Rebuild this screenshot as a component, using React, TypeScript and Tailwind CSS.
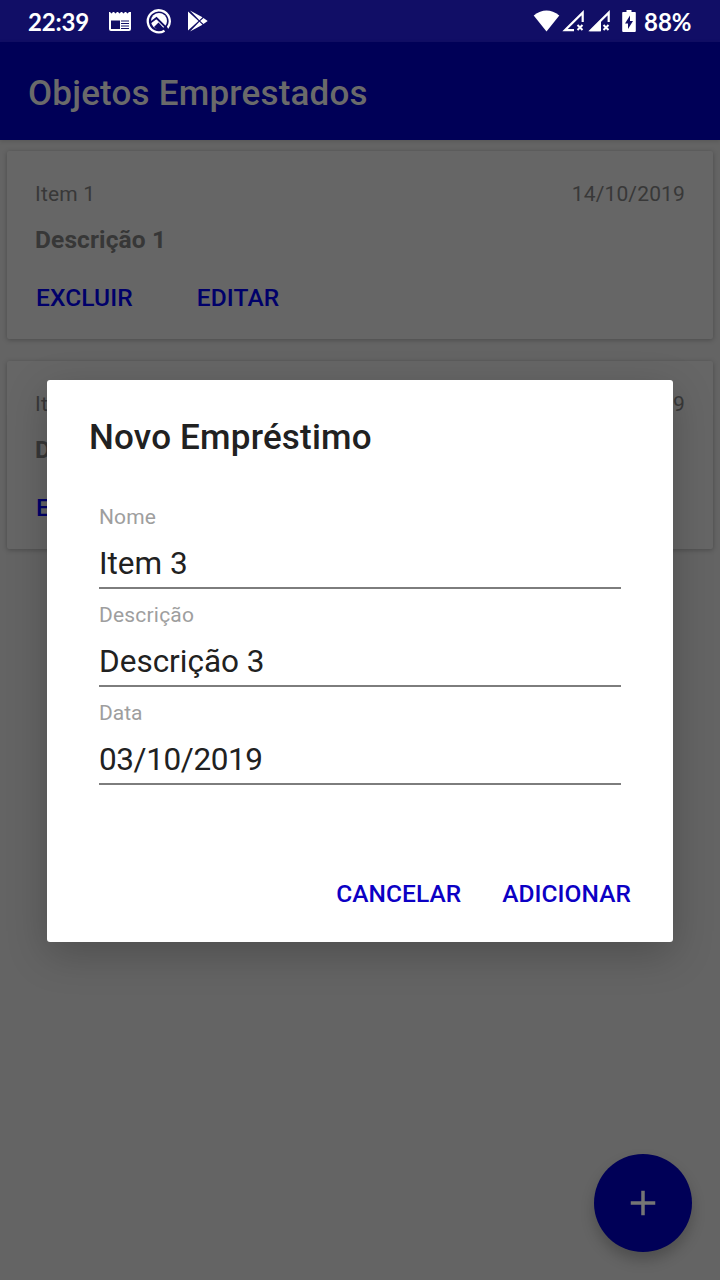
import React from "react";

const loans = [
  { id: 1, name: "Item 1", description: "Descrição 1", date: "14/10/2019" },
  { id: 2, name: "Item 2", description: "Descrição 2", date: "14/10/2019" },
];

const fields = [
  { label: "Nome", value: "Item 3", spacing: "tracking-[0px]", labelSpacing: "tracking-[0.1px]" },
  { label: "Descrição", value: "Descrição 3", spacing: "tracking-[0px]", labelSpacing: "tracking-[0.2px]" },
  { label: "Data", value: "03/10/2019", spacing: "tracking-[-0.4px]", labelSpacing: "tracking-[0px]" },
];

function StatusBar() {
  return (
    <header className="flex h-[42px] shrink-0 items-center bg-[#110e66] pl-[28px] pr-[28px] text-white">
      <span className="w-[80px] font-['Lato'] text-[24px] leading-[43px] font-bold tracking-[-0.2px]">22:39</span>
      <svg className="h-[24px] w-[24px]" viewBox="0 0 24 24">
        <path
          fill="#fff"
          fillRule="evenodd"
          d="M1 3h1l1.500 1.500L5 3h1l1.500 1.500L9 3h1l1.500 1.500L13 3h1l1.500 1.500L17 3h1l1.500 1.500L21 3h2v17a2 2 0 0 1-2 2H3a2 2 0 0 1-2-2zM3 11.500V20h9v-8.500zm10 0v1.100h8v-1.100zm0 2.500v1.100h8V14zm0 2.500v1.100h8v-1.100zm0 2.500v1h8v-1z"
        />
      </svg>
      <svg className="ml-[14px] h-[26px] w-[26px]" viewBox="0 0 26 26" fill="none">
        <path d="M18.500 22.700A11 11 0 1 1 21.500 20" stroke="#fff" strokeWidth="2.300" />
        <circle cx="13" cy="13" r="8" fill="#fff" />
        <path d="M8 19 12.500 14.500l5.500 6Q13 24 8 19z" fill="#110e66" />
        <path d="M4.500 14.500 10.500 10 21 20.500" stroke="#110e66" strokeWidth="1.800" />
      </svg>
      <svg className="ml-[14px] h-[24px] w-[24px]" viewBox="0 0 24 24">
        <path fill="#fff" d="M2 2.500 12.500 12 2 21.500zM4 1.500l12.500 6.800-3.100 2.900zM4 22.500l12.500-6.800-3.100-2.900zM17.500 9l4.200 3-4.200 3-3.300-3z" />
      </svg>
      <div className="ml-auto flex items-center">
        <svg className="h-[24px] w-[27px]" viewBox="0 0 27 24">
          <path fill="#fff" d="M13.500 22.500.700 6.500Q13.500-3.500 26.300 6.500z" />
        </svg>
        <svg className="ml-[2px] h-[24px] w-[23px]" viewBox="0 0 23 24" fill="none">
          <path d="M12 21.200H3L20.700 3.600V13" stroke="#fff" strokeWidth="2.200" />
          <path d="m15.500 16 5 5m0-5-5 5" stroke="#fff" strokeWidth="2" />
        </svg>
        <svg className="ml-[3px] h-[24px] w-[23px]" viewBox="0 0 23 24" fill="none">
          <path d="M12.500 21.200H3L20.700 3.600V13" stroke="#fff" strokeWidth="2.200" />
          <path d="M13 10.500v11.800H1.500z" fill="#fff" />
          <path d="m15.500 16 5 5m0-5-5 5" stroke="#fff" strokeWidth="2" />
        </svg>
        <svg className="ml-[11px] h-[24px] w-[14px]" viewBox="0 0 14 24">
          <path fill="#fff" fillRule="evenodd" d="M4.500 1h5v2H13a.8.8 0 0 1 .8.8V22a1 1 0 0 1-1 1H1.200a1 1 0 0 1-1-1V3.800A.8.8 0 0 1 1 3h3.500zM8 6.500l-5 8h3v5.500l5-8H8z" />
        </svg>
        <span className="ml-[8px] w-[48px] font-['Lato'] text-[24px] leading-[43px] font-bold whitespace-nowrap">88%</span>
      </div>
    </header>
  );
}

function LoanCard({ name, description, date }: { name: string; description: string; date: string }) {
  return (
    <article className="h-[188px] rounded-[2px] bg-[#666] px-[28px] pt-[29px] shadow-[0_1px_5px_rgba(0,0,0,0.26)]">
      <div className="flex justify-between text-[21px] leading-[28px] text-[#383838]">
        <span className="tracking-[0.2px]">{name}</span>
        <span className="tracking-[0.15px]">{date}</span>
      </div>
      <h2 className="mt-[17px] text-[24.500px] leading-[30px] font-bold tracking-[0.12px] text-[#373737]">{description}</h2>
      <div className="mt-[28px] flex gap-[64px] pl-[1px] text-[24.500px] leading-[30px] font-medium tracking-[0.1px] text-[#00006a]">
        <button>EXCLUIR</button>
        <button>EDITAR</button>
      </div>
    </article>
  );
}

function LoanDialog() {
  return (
    <div className="absolute inset-0 flex items-start justify-center pt-[380px]">
      <section
        role="dialog"
        className="flex h-[562px] w-[626px] flex-col rounded-[3px] bg-white px-[42px] shadow-[0_12px_40px_rgba(0,0,0,0.22)]"
      >
        <h2 className="mt-[37px] text-[35px] leading-[42px] font-medium tracking-[0.2px] text-[#212121]">Novo Empréstimo</h2>
        <div className="mt-[42px] mr-[10px] ml-[10px] flex flex-col">
          {fields.map((field) => (
            <label key={field.label} className="flex h-[98px] flex-col">
              <span className={`mt-[4px] text-[21px] leading-[24px] text-[#9e9e9e] ${field.labelSpacing}`}>{field.label}</span>
              <span
                className={`mt-[13px] h-[47px] border-b-2 border-[#7d7d7d] text-[31.500px] leading-[44px] text-[#212121] ${field.spacing}`}
              >
                {field.value}
              </span>
            </label>
          ))}
        </div>
        <div className="mt-[84px] flex justify-end gap-[41px] text-[24.500px] leading-[30px] font-medium tracking-[0.06px] text-[#0c00c4]">
          <button>CANCELAR</button>
          <button>ADICIONAR</button>
        </div>
      </section>
    </div>
  );
}

export default function App() {
  return (
    <div className="relative flex h-[1280px] w-[720px] flex-col overflow-hidden bg-[#646464] font-['Roboto',sans-serif]">
      <StatusBar />
      <div className="flex h-[98px] shrink-0 items-center bg-[#000057] pt-[5px] pl-[28px] shadow-[0_1px_4px_rgba(0,0,0,0.15)]">
        <h1 className="text-[35px] leading-[43px] font-medium tracking-[0.2px] text-[#6a6a6a]">Objetos Emprestados</h1>
      </div>
      <main className="flex flex-col gap-[22px] px-[7px] pt-[11px]">
        {loans.map((loan) => (
          <LoanCard key={loan.id} name={loan.name} description={loan.description} date={loan.date} />
        ))}
      </main>
      <button
        aria-label="Adicionar"
        className="absolute right-[28px] bottom-[28px] flex h-[98px] w-[98px] items-center justify-center rounded-full bg-[#000057] shadow-[0_8px_14px_rgba(0,0,0,0.22)]"
      >
        <svg className="h-[42px] w-[42px]" viewBox="0 0 24 24" fill="#757575">
          <path d="M19 13h-6v6h-2v-6H5v-2h6V5h2v6h6z" />
        </svg>
      </button>
      <LoanDialog />
    </div>
  );
}
